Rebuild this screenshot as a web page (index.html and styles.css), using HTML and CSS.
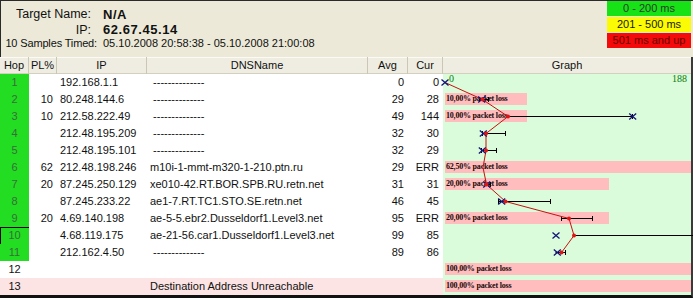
FILE: index.html
```html
<!DOCTYPE html>
<html>
<head>
<meta charset="utf-8">
<title>Trace</title>
<link rel="stylesheet" href="styles.css">
</head>
<body>
<div class="window">
  <div class="panel">
    <div class="info">
      <div class="lbl lbl-big">Target Name:</div><div class="val">N/A</div>
      <div class="lbl lbl-big">IP:</div><div class="val">62.67.45.14</div>
      <div class="lbl">10 Samples Timed:</div><div class="val-plain">05.10.2008 20:58:38 - 05.10.2008 21:00:08</div>
    </div>
    <div class="legend">
      <div class="lg lg-green">0 - 200 ms</div>
      <div class="lg lg-yellow">201 - 500 ms</div>
      <div class="lg lg-red">501 ms and up</div>
    </div>
  </div>
  <div class="list">
    <div class="row head">
      <div class="h">Hop</div><div class="h">PL%</div><div class="h">IP</div><div class="h">DNSName</div><div class="h">Avg</div><div class="h">Cur</div><div class="h h-last">Graph</div>
    </div>
    <div class="rows">
      <div class="row"><div class="c hop">1</div><div class="c pl"></div><div class="c ip">192.168.1.1</div><div class="c dns">&nbsp;--------------</div><div class="c num">0</div><div class="c num">0</div><div class="c graph"></div></div>
      <div class="row"><div class="c hop">2</div><div class="c pl">10</div><div class="c ip">80.248.144.6</div><div class="c dns">&nbsp;--------------</div><div class="c num">29</div><div class="c num">28</div><div class="c graph"><div class="bar" style="width:82px">10,00% packet loss</div></div></div>
      <div class="row"><div class="c hop">3</div><div class="c pl">10</div><div class="c ip">212.58.222.49</div><div class="c dns">&nbsp;--------------</div><div class="c num">49</div><div class="c num">144</div><div class="c graph"><div class="bar" style="width:82px">10,00% packet loss</div></div></div>
      <div class="row"><div class="c hop">4</div><div class="c pl"></div><div class="c ip">212.48.195.209</div><div class="c dns">&nbsp;--------------</div><div class="c num">32</div><div class="c num">30</div><div class="c graph"></div></div>
      <div class="row"><div class="c hop">5</div><div class="c pl"></div><div class="c ip">212.48.195.101</div><div class="c dns">&nbsp;--------------</div><div class="c num">32</div><div class="c num">29</div><div class="c graph"></div></div>
      <div class="row"><div class="c hop">6</div><div class="c pl">62</div><div class="c ip">212.48.198.246</div><div class="c dns">m10i-1-mmt-m320-1-210.ptn.ru</div><div class="c num">29</div><div class="c num">ERR</div><div class="c graph"><div class="bar" style="width:246px">62,50% packet loss</div></div></div>
      <div class="row"><div class="c hop">7</div><div class="c pl">20</div><div class="c ip">87.245.250.129</div><div class="c dns">xe010-42.RT.BOR.SPB.RU.retn.net</div><div class="c num">31</div><div class="c num">31</div><div class="c graph"><div class="bar" style="width:164px">20,00% packet loss</div></div></div>
      <div class="row"><div class="c hop">8</div><div class="c pl"></div><div class="c ip">87.245.233.22</div><div class="c dns">ae1-7.RT.TC1.STO.SE.retn.net</div><div class="c num">46</div><div class="c num">45</div><div class="c graph"></div></div>
      <div class="row"><div class="c hop">9</div><div class="c pl">20</div><div class="c ip">4.69.140.198</div><div class="c dns">ae-5-5.ebr2.Dusseldorf1.Level3.net</div><div class="c num">95</div><div class="c num">ERR</div><div class="c graph"><div class="bar" style="width:164px">20,00% packet loss</div></div></div>
      <div class="row"><div class="c hop hop-focus">10</div><div class="c pl"></div><div class="c ip">4.68.119.175</div><div class="c dns">ae-21-56.car1.Dusseldorf1.Level3.net</div><div class="c num">99</div><div class="c num">85</div><div class="c graph"></div></div>
      <div class="row"><div class="c hop">11</div><div class="c pl"></div><div class="c ip">212.162.4.50</div><div class="c dns">&nbsp;--------------</div><div class="c num">89</div><div class="c num">86</div><div class="c graph"></div></div>
      <div class="row"><div class="c hop hop-none">12</div><div class="c pl"></div><div class="c ip"></div><div class="c dns"></div><div class="c num"></div><div class="c num"></div><div class="c graph"><div class="bar" style="width:246px">100,00% packet loss</div></div></div>
      <div class="row unreach"><div class="c hop hop-none">13</div><div class="c pl"></div><div class="c ip"></div><div class="c dns">Destination Address Unreachable</div><div class="c num"></div><div class="c num"></div><div class="c graph"><div class="bar" style="width:246px">100,00% packet loss</div></div></div>

      <svg class="plot" width="250" height="221" viewBox="0 0 250 221">
        <g class="axis">
          <text x="6" y="8">0</text>
          <text x="229" y="8">188</text>
        </g>
        <g class="err">
          <path d="M36.5 25.5H45.5M36.5 23v5M45.5 23v5"/>
          <path d="M65 42.5H189.5M189.5 40v5"/>
          <path d="M39.5 59.5H62.5M39.5 57v5M62.5 57v5"/>
          <path d="M38.5 76.5H53.5M38.5 74v5M53.5 74v5"/>
          <path d="M41.5 110.5H47.5M47.5 108v5"/>
          <path d="M55.5 127.5H107.5M55.5 125v5M107.5 125v5"/>
          <path d="M118.5 144.5H149.5M118.5 142v5M149.5 142v5"/>
          <path d="M131 161.5H252"/>
          <path d="M112.5 178.5H122.5M122.5 176v5"/>
        </g>
        <polyline class="avgline" points="2,8.5 39.5,25.5 65,42.5 43,59.5 43,76.5 40,93.5 43.5,110.5 62.5,127.5 126,144.5 131,161.5 118.5,178.5"/>
        <g class="xm">
          <path d="M-1.5 5.5L5.5 11.5M-1.5 11.5L5.5 5.5"/>
          <path d="M35.2 22.5L42.2 28.5M35.2 28.5L42.2 22.5"/>
          <path d="M186.2 39.5L193.2 45.5M186.2 45.5L193.2 39.5"/>
          <path d="M36.8 56.5L43.8 62.5M36.8 62.5L43.8 56.5"/>
          <path d="M35.8 73.5L42.8 79.5M35.8 79.5L42.8 73.5"/>
          <path d="M40.2 107.5L47.2 113.5M40.2 113.5L47.2 107.5"/>
          <path d="M55.2 124.5L62.2 130.5M55.2 130.5L62.2 124.5"/>
          <path d="M109.5 158.5L116.5 164.5M109.5 164.5L116.5 158.5"/>
          <path d="M110.8 175.5L117.8 181.5M110.8 181.5L117.8 175.5"/>
        </g>
        <g class="dots">
          <circle cx="39.5" cy="25.5" r="2"/>
          <circle cx="65" cy="42.5" r="2"/>
          <circle cx="43" cy="59.5" r="2"/>
          <circle cx="43" cy="76.5" r="2"/>
          <circle cx="43.5" cy="110.5" r="2"/>
          <circle cx="62.5" cy="127.5" r="2"/>
          <circle cx="126" cy="144.5" r="2"/>
          <circle cx="131" cy="161.5" r="2"/>
          <circle cx="118.5" cy="178.5" r="2"/>
        </g>
      </svg>
    </div>
  </div>
</div>
</body>
</html>
```

FILE: styles.css
```css
* {
  box-sizing: border-box;
  margin: 0;
  padding: 0;
}

body {
  margin: 0;
  width: 693px;
  height: 298px;
  overflow: hidden;
  background: #ece9d8;
  font-family: "Liberation Sans", Arial, sans-serif;
  font-size: 11px;
  color: #000;
}

.window {
  width: 693px;
  height: 298px;
  display: flex;
  flex-direction: column;
}

/* top info panel */
.panel {
  flex: none;
  height: 57px;
  background: #ece9d8;
  border-top: 1px solid #2a2a2a;
  border-left: 1px solid #2a2a2a;
  display: flex;
  justify-content: space-between;
  align-items: flex-start;
}

.info {
  display: grid;
  grid-template-columns: 96px auto;
  grid-template-rows: 16px 15px 12px;
  column-gap: 6px;
  align-items: center;
  margin-top: 5px;
  white-space: nowrap;
}

.lbl {
  text-align: right;
  font-size: 11px;
  letter-spacing: -0.15px;
  color: #111;
}

.lbl-big {
  font-size: 12.5px;
  letter-spacing: 0;
  padding-right: 6px;
}

.val {
  font-weight: bold;
  font-size: 13px;
  letter-spacing: 0.55px;
  color: #111;
}

.val-plain {
  font-size: 11px;
  color: #111;
}

.legend {
  display: flex;
  flex-direction: column;
  gap: 1px;
  width: 84px;
  margin-right: 2px;
}

.lg {
  height: 15px;
  line-height: 15px;
  text-align: center;
  font-size: 11px;
  white-space: nowrap;
}

.lg-green {
  background: #16e216;
  color: #2c3a2c;
}

.lg-yellow {
  background: #fbfb06;
  color: #1a1a00;
}

.lg-red {
  background: #f40a0a;
  color: #6a0000;
}

/* list */
.list {
  flex: 1;
  background: #fff;
  border-right: 2px solid #3a3a3a;
  border-bottom: 3px solid #111;
}

.row {
  display: grid;
  grid-template-columns: 29px 28px 90px 221px 40px 35px 248px;
  height: 17px;
  line-height: 17px;
  white-space: nowrap;
}

.head {
  background: #efede2;
  box-shadow: inset 0 1px 0 #fbfaf5, inset 0 -1px 0 #d3d0c0;
}

.h {
  text-align: center;
  border-right: 1px solid #cac7b5;
  color: #111;
}

.h-last {
  border-right: none;
}

.rows {
  position: relative;
}

.c {
  overflow: hidden;
  color: #111;
}

.hop {
  background: #22dd22;
  color: #3a6e3a;
  text-align: center;
}

.hop-focus {
  box-shadow: inset 1px 1px 0 #000;
}

.hop-none {
  background: transparent;
  color: #111;
}

.pl {
  text-align: right;
  padding-right: 4px;
}

.ip {
  padding-left: 3px;
}

.dns {
  padding-left: 3px;
}

.num {
  text-align: right;
  padding-right: 4px;
}

.unreach .c {
  background: #fce4e4;
}

.unreach .graph {
  background: #dafcda;
}

.graph {
  background: #dafcda;
  padding-top: 2px;
  padding-left: 2px;
}

.bar {
  height: 12px;
  line-height: 12px;
  background: #ffbdbd;
  font-family: "Liberation Serif", "Times New Roman", serif;
  font-weight: bold;
  font-size: 8px;
  letter-spacing: -0.2px;
  padding-left: 1px;
  color: #1a0a0a;
  overflow: hidden;
}

/* graph overlay */
.plot {
  position: absolute;
  left: 443px;
  top: 0;
  overflow: visible;
  pointer-events: none;
}

.axis {
  fill: #0a7a0a;
  font-family: "Liberation Serif", "Times New Roman", serif;
  font-size: 10px;
}

.err {
  stroke: #000;
  stroke-width: 1;
  fill: none;
}

.avgline {
  fill: none;
  stroke: #c81010;
  stroke-width: 1;
}

.xm {
  stroke: #141478;
  stroke-width: 1.3;
  fill: none;
}

.dots {
  fill: #e01414;
}
```
